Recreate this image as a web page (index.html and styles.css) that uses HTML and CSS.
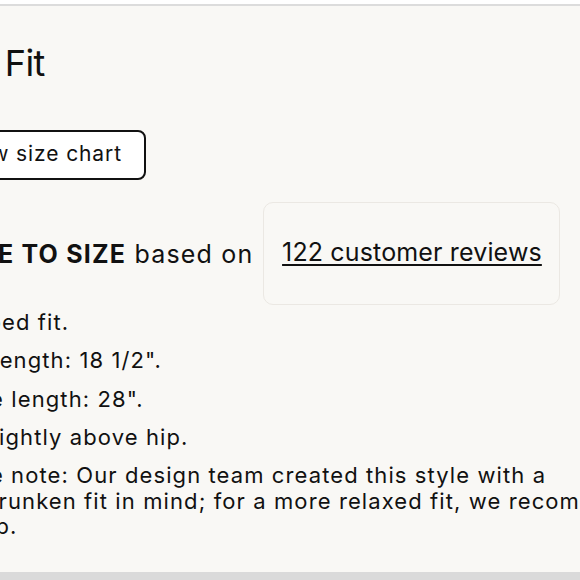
FILE: index.html
```html
<!DOCTYPE html>
<html lang="en">
<head>
<meta charset="utf-8">
<title>The Fit</title>
<link rel="stylesheet" href="styles.css">
</head>
<body>
<div class="page">
  <section class="fit">
    <div class="fit-inner">
      <h2 class="title">The Fit</h2>
      <button class="chart-btn" type="button">View size chart</button>
      <div class="verdict">
        <p class="verdict-text"><strong>TRUE TO SIZE</strong> based on</p>
        <a class="reviews" href="#reviews">122 customer reviews</a>
      </div>
      <ul class="details">
        <li>Wrapped fit.</li>
        <li>Body length: 18 1/2".</li>
        <li>Sleeve length: 28".</li>
        <li>Hits slightly above hip.</li>
        <li class="note">Please note: Our design team created this style with a<br>tad shrunken fit in mind; for a more relaxed fit, we recommend you<br>size up.</li>
      </ul>
    </div>
  </section>
  <div class="rule"></div>
</div>
</body>
</html>
```
FILE: styles.css
```css
* { box-sizing: border-box; }

html, body {
  margin: 0;
  padding: 0;
  overflow: hidden;
  background: #ffffff;
}

body {
  font-family: Inter, Lato, sans-serif;
  color: #111111;
}

.page {
  width: 580px;
  height: 580px;
  display: flex;
  flex-direction: column;
  padding-top: 4px;
}

.fit {
  flex: 1;
  background: #f9f8f5;
  border-top: 2px solid #dcdcdc;
  overflow: hidden;
}

.fit-inner {
  margin-left: -72px;
  width: 860px;
  padding-top: 35px;
  display: flex;
  flex-direction: column;
  align-items: flex-start;
}

.title {
  margin: 0 0 0 3px;
  font-size: 36px;
  font-weight: 400;
  letter-spacing: -0.5px;
  line-height: 44px;
}

.chart-btn {
  margin-top: 45px;
  height: 50px;
  border: 2px solid #111111;
  border-radius: 8px;
  background: #ffffff;
  color: #111111;
  font-family: Inter, Lato, sans-serif;
  font-size: 21px;
  letter-spacing: 0.9px;
  line-height: 1.2;
  padding: 0 22px 3px 27px;
}

.verdict {
  margin: 22px 0 0 15px;
  display: flex;
  align-items: center;
  gap: 10px;
}

.verdict-text {
  margin: 0;
  font-size: 25px;
  letter-spacing: 1.2px;
  line-height: 1.2;
}

.verdict-text strong {
  font-weight: 700;
}

.reviews {
  display: block;
  width: 297px;
  height: 103px;
  padding: 34px 8px 0;
  border: 1.5px solid #ebe8e3;
  border-radius: 10px;
  font-size: 25px;
  letter-spacing: 0.15px;
  line-height: 1.2;
  text-align: center;
  color: #111111;
  text-decoration: underline;
  text-decoration-thickness: 1.5px;
  text-underline-offset: 3px;
}

.details {
  list-style: none;
  margin: 5px 0 0;
  padding: 0;
}

.details li {
  font-size: 22px;
  letter-spacing: 1.1px;
  line-height: 25.5px;
  margin-bottom: 12.8px;
  white-space: nowrap;
}

.rule {
  height: 8px;
  background: #dadada;
}
```
